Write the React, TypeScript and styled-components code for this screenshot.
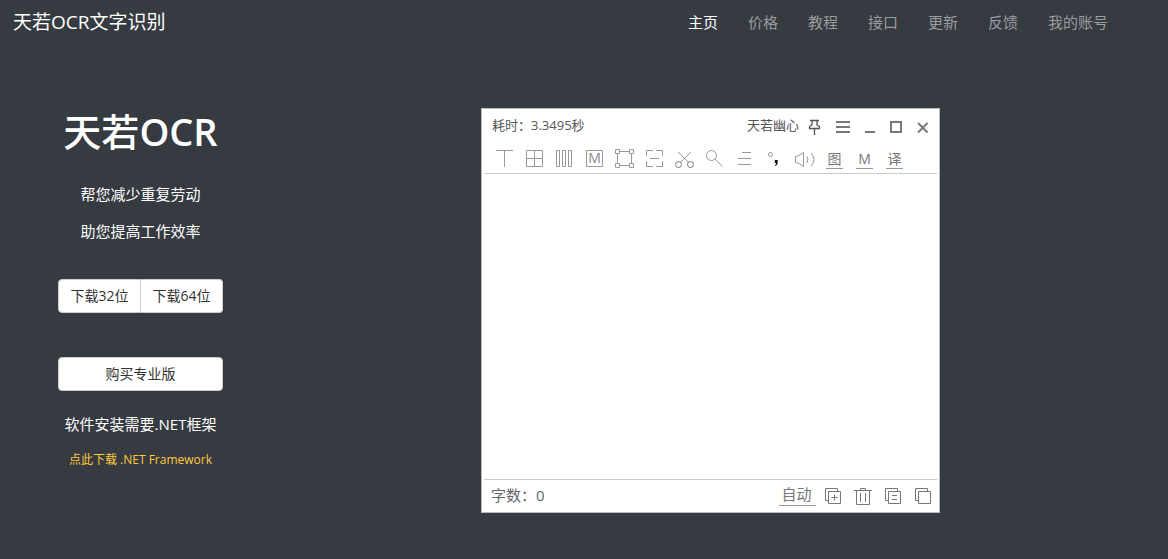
import React from "react";
import styled, { createGlobalStyle, css } from "styled-components";

const Global = createGlobalStyle`
  * { box-sizing: border-box; }
  body {
    margin: 0;
    background: #363a41;
    color: #fff;
    font-family: "Open Sans", "Noto Sans CJK SC", sans-serif;
    font-size: 15px;
    line-height: 22px;
  }
  p, h1 { margin: 0; }
  button { font: inherit; cursor: pointer; }
`;

const Navbar = styled.header`
  display: flex;
  align-items: center;
  justify-content: space-between;
  height: 44px;
  padding: 0 60px 0 13px;
`;

const Brand = styled.a`
  color: #fff;
  font-size: 19px;
  text-decoration: none;
`;

const NavLinks = styled.nav`
  display: flex;
  gap: 30px;
`;

const NavLink = styled.a<{ $active?: boolean }>`
  color: ${(p) => (p.$active ? "#fff" : "#9a9c9f")};
  text-decoration: none;
`;

const Main = styled.main`
  display: grid;
  grid-template-columns: 281px 1fr;
  padding: 64px 28px 46px 0;
`;

const Intro = styled.section`
  display: flex;
  flex-direction: column;
  align-items: center;
  text-align: center;
`;

const Title = styled.h1`
  font-size: 38px;
  font-weight: 500;
  line-height: 46px;
`;

const TitleLatin = styled.span`
  font-weight: 600;
`;

const Slogans = styled.div`
  display: flex;
  flex-direction: column;
  gap: 15px;
  margin-top: 29px;
`;

const Downloads = styled.div`
  display: flex;
  width: 165px;
  margin-top: 37px;
`;

const LightButton = styled.button<{ $part?: "left" | "right" }>`
  flex: 1;
  height: 34px;
  padding: 0;
  border: 1px solid #ccc;
  border-radius: 4px;
  background: #fff;
  color: #333;
  font-size: 14px;
  white-space: nowrap;
  ${(p) =>
    p.$part === "left" &&
    css`
      border-radius: 4px 0 0 4px;
    `}
  ${(p) =>
    p.$part === "right" &&
    css`
      border-left: 0;
      border-radius: 0 4px 4px 0;
    `}
`;

const Purchase = styled(Downloads)`
  margin-top: 44px;
`;

const Requirement = styled.p`
  margin-top: 22px;
`;

const FrameworkLink = styled.a`
  margin-top: 14px;
  color: #ffc93c;
  font-size: 12px;
  text-decoration: none;
`;

const Preview = styled.section`
  display: flex;
  justify-content: center;
  align-items: flex-start;
`;

const AppWindow = styled.div`
  display: flex;
  flex-direction: column;
  width: 100%;
  max-width: 459px;
  border: 1px solid #bbb;
  background: #fff;
  color: #555;
`;

const TitleBar = styled.div`
  display: flex;
  align-items: center;
  justify-content: space-between;
  height: 35px;
  padding: 0 3px 0 10px;
  font-size: 13px;
`;

const BarText = styled.span`
  padding: 0 2px 3px 0;
`;

const TitleActions = styled.div`
  display: flex;
  align-items: center;
`;

const Tools = styled.div`
  display: flex;
  height: 29px;
  padding-left: 8px;
`;

const IconButton = styled.button<{ $w: number; $h: number }>`
  flex: none;
  width: ${(p) => p.$w}px;
  height: ${(p) => p.$h}px;
  padding: 0;
  border: 0;
  background: none;
  color: #999;

  svg {
    display: block;
    fill: none;
    stroke: currentColor;
  }
`;

const TextTool = styled.button`
  flex: none;
  width: 17px;
  height: 19px;
  margin: 6px 7px 0 6px;
  padding: 0;
  border: 0;
  border-bottom: 1px solid #999;
  background: none;
  color: #777;
  font-size: 14px;
  line-height: 18px;
`;

const Editor = styled.textarea`
  display: block;
  height: 307px;
  margin: 0 2px;
  padding: 4px;
  border: 0;
  border-top: 1px solid #ccc;
  border-bottom: 1px solid #ccc;
  outline: 0;
  resize: none;
  background: #fff;
`;

const StatusBar = styled.div`
  display: flex;
  align-items: center;
  justify-content: space-between;
  height: 32px;
  padding: 0 1px 0 9px;
  color: #666;
`;

const StatusActions = styled.div`
  display: flex;
`;

const AutoButton = styled.button`
  width: 37px;
  height: 23px;
  margin: 3px 2px 0 0;
  padding: 0 2px 0 0;
  border: 0;
  border-bottom: 1px solid #999;
  background: none;
  color: #777;
`;

type Glyph = { label: string; art: React.ReactNode };

const toolIcons: Glyph[] = [
  { label: "文本", art: <path d="M6 6.5H23M14.5 6V23" /> },
  {
    label: "表格",
    art: <path d="M6.5 6.5H22.5V22.5H6.5ZM14.5 6.5V22.5M6.5 14.5H22.5" />,
  },
  {
    label: "竖排",
    art: <path d="M6.5 6.5h3v16h-3zM12.5 6.5h3v16h-3zM18.5 6.5h3v16h-3z" />,
  },
  {
    label: "公式",
    art: (
      <>
        <path d="M6.5 6.5H22.5V22.5H6.5Z" />
        <text x="14.5" y="19" textAnchor="middle" fontSize="14" fill="#888" stroke="none">
          M
        </text>
      </>
    ),
  },
  {
    label: "选区",
    art: (
      <path d="M5.5 5.5h4v4h-4zM19.5 5.5h4v4h-4zM5.5 19.5h4v4h-4zM19.5 19.5h4v4h-4zM10 7.5h9M10 21.5h9M7.5 10v9M21.5 10v9" />
    ),
  },
  {
    label: "扫描",
    art: (
      <path d="M13 6.5H6.5V12M16 6.5H22.5V12M6.5 17V22.5H13M16 22.5H22.5V17M10 14.5H19" />
    ),
  },
  {
    label: "剪切",
    art: (
      <>
        <circle cx="8.5" cy="20.5" r="3" stroke="#777" />
        <circle cx="20.5" cy="20.5" r="3" stroke="#777" />
        <path d="M8 8L18.500 18.300M21 8L10.500 18.300" />
      </>
    ),
  },
  {
    label: "搜索",
    art: (
      <>
        <circle cx="11.5" cy="11.5" r="5" />
        <path d="M15.2 15.2L22.5 22.5" />
      </>
    ),
  },
  { label: "段落", art: <path d="M12 8.500H21M8 14.500H21M8 20.500H21" /> },
  {
    label: "标点",
    art: (
      <>
        <circle cx="10.5" cy="10.5" r="2" />
        <path
          d="M14.800 16h2.900v2.500c0 1.800-.9 3-2.700 3.500v-1c.9-.4 1.200-1 1.200-1.900h-1.400z"
          fill="#111"
          stroke="none"
        />
      </>
    ),
  },
  {
    label: "朗读",
    art: (
      <path d="M13.500 8.500V22.500L9 19.500L5.500 18.500V12.500L9 11.500ZM16.800 12.500Q18.800 15.800 16.800 19M21 9Q27 15.500 21 22" />
    ),
  },
];

const statusIcons: Glyph[] = [
  {
    label: "追加",
    art: (
      <path d="M10.500 11.500h12v12h-12zM10.500 20.500H7.500V8.500H19.500V11.500M16.500 14.500V20.500M13.500 17.500H19.500" />
    ),
  },
  {
    label: "清空",
    art: (
      <path d="M6 10.500H24M12.500 10.500V8.500H17.500V10.500M8.500 10.500V24.500H21.500V10.500M12.500 13V22M17.500 13V22" />
    ),
  },
  {
    label: "复制文本",
    art: (
      <path d="M10.500 11.500h12v12h-12zM10.500 20.500H7.500V8.500H19.500V11.500M14 15.500H19M14 19.500H19" />
    ),
  },
  {
    label: "复制",
    art: <path d="M10.500 11.500h12v12h-12zM10.500 20.500H7.500V8.500H19.500V11.500" />,
  },
];

const navItems = ["主页", "价格", "教程", "接口", "更新", "反馈", "我的账号"];

const windowIcons: Glyph[] = [
  {
    label: "置顶",
    art: (
      <path
        d="M9 11.500H18M11 11.500V16L8.500 17.500V19.500H18.500V17.500L16 16V11.500M13.500 19.500V26"
        stroke="#555"
        strokeWidth="1.300"
      />
    ),
  },
  { label: "菜单", art: <path d="M8 13H22M8 18H22M8 23H22" strokeWidth="2" /> },
  { label: "最小化", art: <path d="M10 23H20" strokeWidth="2" /> },
  { label: "最大化", art: <path d="M9 13h10v10h-10z" strokeWidth="2" /> },
  { label: "关闭", art: <path d="M9 14L18.500 23.500M18.500 14L9 23.500" strokeWidth="2" /> },
];

export default function App() {
  return (
    <>
      <Global />
      <Navbar>
        <Brand href="#">天若OCR文字识别</Brand>
        <NavLinks>
          {navItems.map((item, i) => (
            <NavLink key={item} href="#" $active={i === 0}>
              {item}
            </NavLink>
          ))}
        </NavLinks>
      </Navbar>
      <Main>
        <Intro>
          <Title>
            天若<TitleLatin>OCR</TitleLatin>
          </Title>
          <Slogans>
            <p>帮您减少重复劳动</p>
            <p>助您提高工作效率</p>
          </Slogans>
          <Downloads>
            <LightButton $part="left">下载32位</LightButton>
            <LightButton $part="right">下载64位</LightButton>
          </Downloads>
          <Purchase>
            <LightButton>购买专业版</LightButton>
          </Purchase>
          <Requirement>软件安装需要.NET框架</Requirement>
          <FrameworkLink href="#">点此下载 .NET Framework</FrameworkLink>
        </Intro>
        <Preview>
          <AppWindow>
            <TitleBar>
              <BarText>耗时：3.3495秒</BarText>
              <TitleActions>
                <BarText>天若幽心</BarText>
                {windowIcons.map((g) => (
                  <IconButton key={g.label} aria-label={g.label} $w={27} $h={35}>
                    <svg width="27" height="35" viewBox="0 0 27 35" color="#777">
                      {g.art}
                    </svg>
                  </IconButton>
                ))}
              </TitleActions>
            </TitleBar>
            <Tools>
              {toolIcons.map((g) => (
                <IconButton key={g.label} aria-label={g.label} $w={30} $h={29}>
                  <svg width="30" height="29" viewBox="0 0 30 29">
                    {g.art}
                  </svg>
                </IconButton>
              ))}
              <TextTool>图</TextTool>
              <TextTool>M</TextTool>
              <TextTool>译</TextTool>
            </Tools>
            <Editor aria-label="识别结果" />
            <StatusBar>
              <BarText>字数：0</BarText>
              <StatusActions>
                <AutoButton>自动</AutoButton>
                {statusIcons.map((g) => (
                  <IconButton key={g.label} aria-label={g.label} $w={30} $h={32}>
                    <svg width="30" height="32" viewBox="0 0 30 32" color="#777">
                      {g.art}
                    </svg>
                  </IconButton>
                ))}
              </StatusActions>
            </StatusBar>
          </AppWindow>
        </Preview>
      </Main>
    </>
  );
}
